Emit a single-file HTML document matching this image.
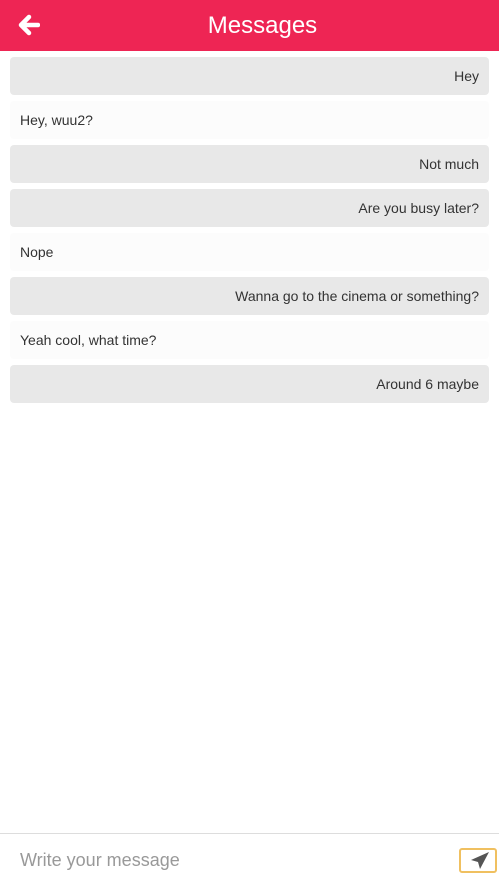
<!DOCTYPE html>
<html><head><style>
body{margin:0;width:499px;height:886px;background:#fff;font-family:"Liberation Sans",sans-serif;position:relative;overflow:hidden}
.hd{position:absolute;left:0;top:0;width:499px;height:51px;background:#ee2554;color:#fff;text-align:center;font-size:24px;line-height:51px;box-sizing:border-box;padding-left:26px}
.hd svg{position:absolute;left:18px;top:14px}
.b{position:absolute;left:10px;width:459px;height:38px;border-radius:4px;font-size:14px;color:#333;line-height:38px;padding:0 10px}
.g{background:#e8e8e8;text-align:right}
.w{background:#fcfcfc;text-align:left}
.in{position:absolute;left:0;top:833px;width:499px;height:53px;border-top:1px solid #ddd;box-sizing:border-box}
.in span{position:absolute;left:20px;top:16px;font-size:18px;color:#999}
.btn{position:absolute;left:459px;top:14px;width:34px;height:21px;border:2px solid #f0c060;border-radius:3px}
</style></head><body>
<div class="hd"><svg width="22" height="22" viewBox="0 0 22 22"><path d="M11 3 L3 11 L11 19 M3.5 11 H20" stroke="#fff" stroke-width="4.5" fill="none" stroke-linecap="round" stroke-linejoin="round"/></svg>Messages</div>
<div class="b g" style="top:57px">Hey</div>
<div class="b w" style="top:101px">Hey, wuu2?</div>
<div class="b g" style="top:145px">Not much</div>
<div class="b g" style="top:189px">Are you busy later?</div>
<div class="b w" style="top:233px">Nope</div>
<div class="b g" style="top:277px">Wanna go to the cinema or something?</div>
<div class="b w" style="top:321px">Yeah cool, what time?</div>
<div class="b g" style="top:365px">Around 6 maybe</div>
<div class="in"><span>Write your message</span><div class="btn"><svg width="34" height="21" viewBox="0 0 34 21"><path d="M28 2 L10 10 L17 12 L19 19 Z" fill="#555"/></svg></div></div>
</body></html>
